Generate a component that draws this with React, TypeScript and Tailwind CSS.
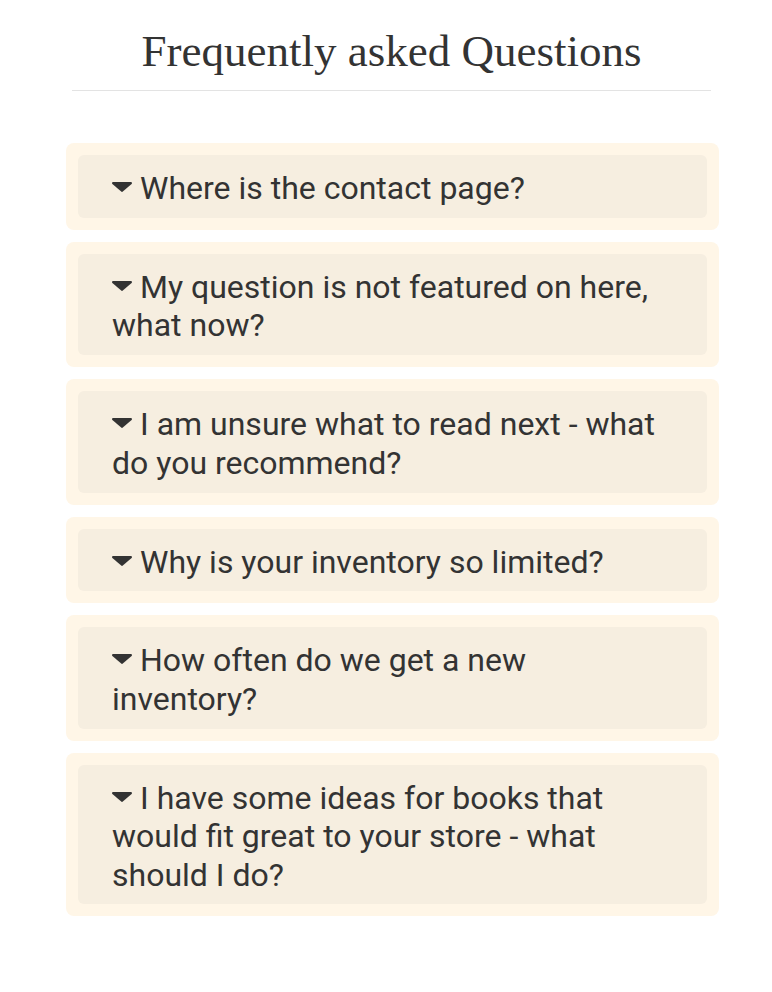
const questions = [
  "Where is the contact page?",
  "My question is not featured on here, what now?",
  "I am unsure what to read next - what do you recommend?",
  "Why is your inventory so limited?",
  "How often do we get a new inventory?",
  "I have some ideas for books that would fit great to your store - what should I do?",
];

function Caret() {
  return (
    <svg viewBox="0 0 20 10" className="inline-block w-[20px] h-[10px] mr-[8px] align-[0.22em]" aria-hidden>
      <path d="M1.2 0h17.6c1 0 1.5 1.2.8 1.9l-8.8 7.7c-.5.4-1.1.4-1.6 0L.4 1.9C-.3 1.2.2 0 1.2 0z" fill="#333333" />
    </svg>
  );
}

export default function App() {
  return (
    <div className="w-[772px] min-h-[992px] bg-white text-[#333333]" style={{ fontFamily: "Roboto, 'Liberation Sans', sans-serif" }}>
      {/* Heading */}
      <div className="ml-[72px] w-[639px] pt-[24px] border-b border-[#e3e3e3] pb-[12px]">
        <h1
          className="text-center text-[45px] leading-[54px] text-[#333333]"
          style={{ fontFamily: "'Liberation Serif', 'DejaVu Serif', serif" }}
        >
          Frequently asked Questions
        </h1>
      </div>

      {/* Questions */}
      <div className="ml-[66px] w-[653px] mt-[52px] flex flex-col gap-[12px]">
        {questions.map((q) => (
          <div key={q} className="bg-[#fff6e7] rounded-[8px] p-[12px]">
            <div className="bg-[#f6eee0] rounded-[6px] pl-[34px] pr-[40px] pt-[14px] pb-[10.5px] text-[32px] leading-[38.4px]">
              <Caret />
              {q}
            </div>
          </div>
        ))}
      </div>
    </div>
  );
}
